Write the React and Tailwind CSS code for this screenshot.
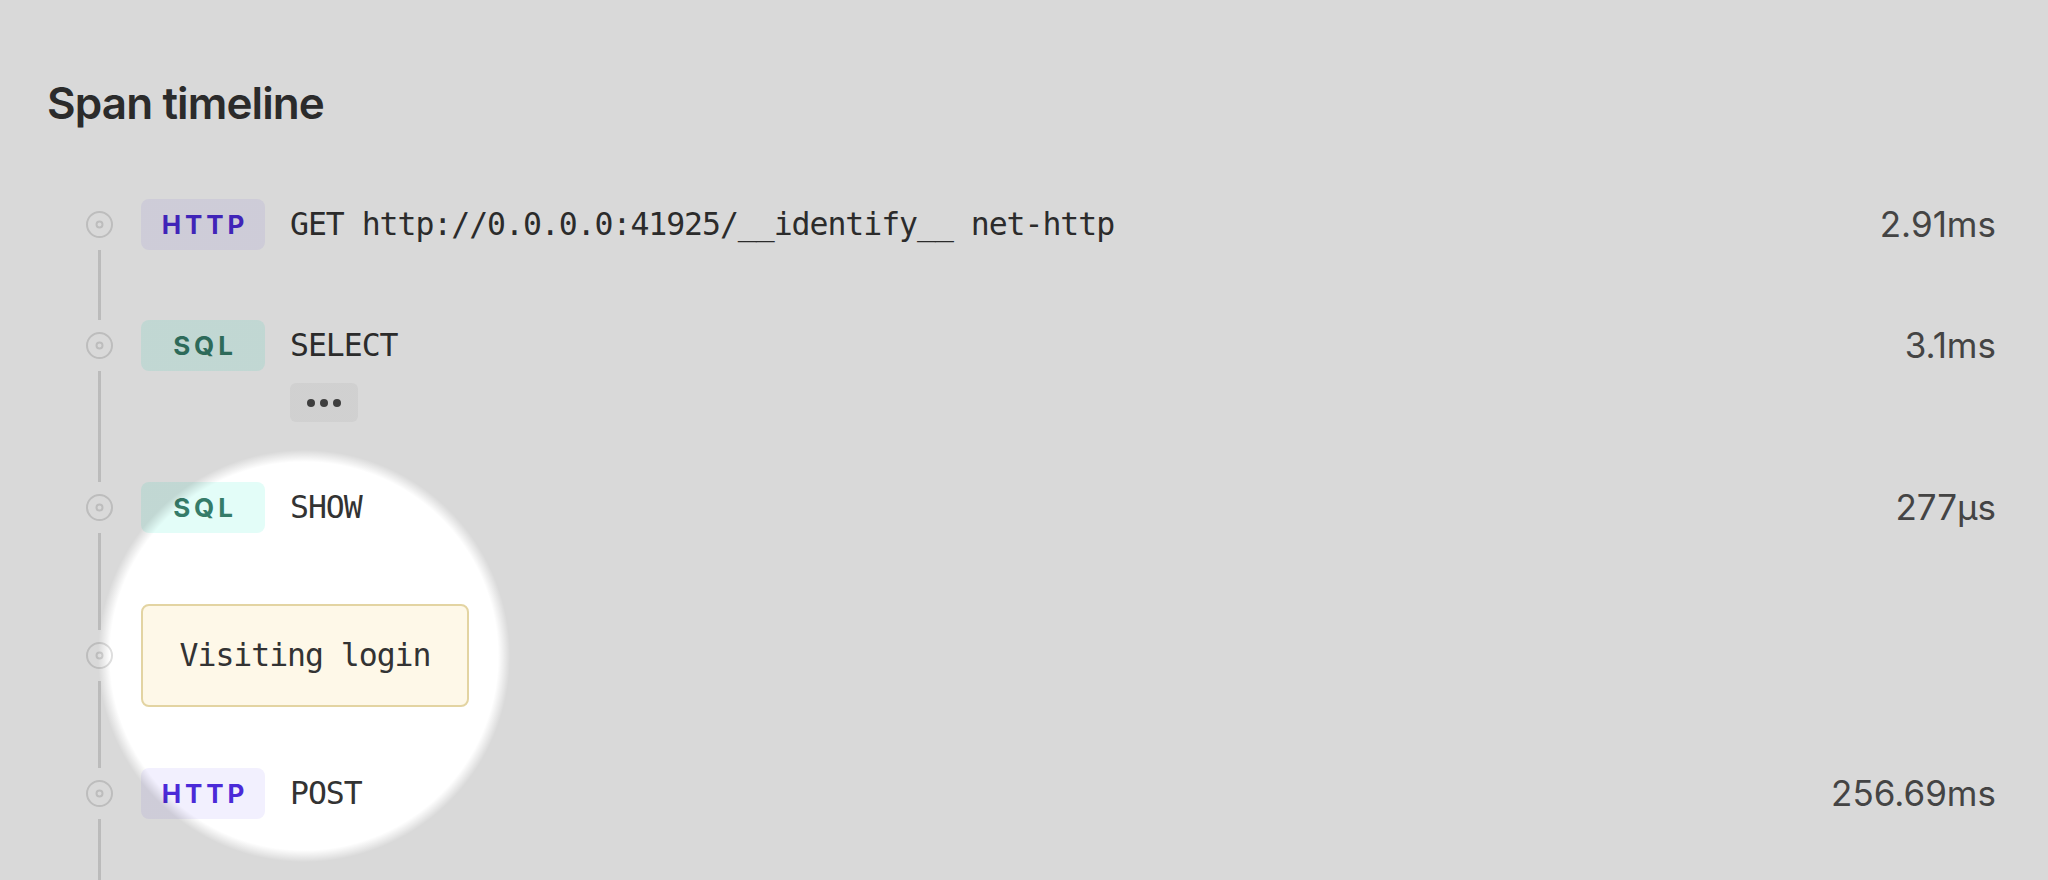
import React from 'react';

// Timeline node marker: outer ring with small inner ring
const Node = () => (
  <svg width="27" height="27" viewBox="0 0 27 27">
    <circle cx="13.5" cy="13.5" r="12.5" fill="none" stroke="#dedede" strokeWidth="2" />
    <circle cx="13.5" cy="13.5" r="3" fill="none" stroke="#dedede" strokeWidth="2" />
  </svg>
);

const Badge = ({ kind }) => {
  const styles = {
    HTTP: 'bg-[#f2f0fe] text-[#4b2ad8]',
    SQL: 'bg-[#e3fdf8] text-[#357c69]',
  };
  return (
    <div
      className={`flex h-[51px] w-[124px] shrink-0 items-center justify-center rounded-[8px] pl-[0.15em] font-['Inter',sans-serif] text-[26px] font-bold tracking-[0.15em] ${styles[kind]}`}
    >
      {kind}
    </div>
  );
};

const Duration = ({ children }) => (
  <div className="ml-auto font-['Inter',sans-serif] text-[35px] leading-none text-[#505050]">
    {children}
  </div>
);

const Row = ({ head, children, bodyClass }) => (
  <div className="flex flex-col">
    <div className="flex items-stretch">
      <div className="flex w-[27px] shrink-0 flex-col items-center">
        <div className="w-[3px] flex-1 bg-[#dcdcdc]" />
        <div className="my-3 flex">
          <Node />
        </div>
        <div className="w-[3px] flex-1 bg-[#dcdcdc]" />
      </div>
      <div className="ml-[28px] flex flex-1 items-center">{head}</div>
    </div>
    <div className="flex">
      <div className="flex w-[27px] shrink-0 justify-center">
        <div className="w-[3px] bg-[#dcdcdc]" />
      </div>
      <div className={`ml-[28px] flex-1 ${bodyClass}`}>{children}</div>
    </div>
  </div>
);

const SpanText = ({ children }) => (
  <span className="ml-[25px] font-['DejaVu_Sans_Mono',monospace] text-[31.5px] leading-none tracking-[-1.05px] text-[#333333]">
    {children}
  </span>
);

export default function App() {
  return (
    <div className="relative h-[880px] overflow-hidden bg-white">
      <div className="pl-[47px] pr-[52px] pt-[81px]">
        <h1 className="font-['Inter',sans-serif] text-[44px] font-semibold leading-none tracking-[-0.02em] text-[#323232]">
          Span timeline
        </h1>

        <div className="ml-[39px] mt-[74px]">
          <Row
            bodyClass="pb-[70px]"
            head={
              <>
                <Badge kind="HTTP" />
                <SpanText>GET http://0.0.0.0:41925/__identify__ net-http</SpanText>
                <Duration>2.91ms</Duration>
              </>
            }
          />

          <Row
            bodyClass="pt-[12px] pb-[60px]"
            head={
              <>
                <Badge kind="SQL" />
                <SpanText>SELECT</SpanText>
                <Duration>3.1ms</Duration>
              </>
            }
          >
            <div className="ml-[149px] flex h-[39px] w-[68px] items-center justify-center gap-[5px] rounded-[6px] bg-[#f5f5f5]">
              <span className="h-[8px] w-[8px] rounded-full bg-[#494949]" />
              <span className="h-[8px] w-[8px] rounded-full bg-[#494949]" />
              <span className="h-[8px] w-[8px] rounded-full bg-[#494949]" />
            </div>
          </Row>

          <Row
            bodyClass="pb-[71px]"
            head={
              <>
                <Badge kind="SQL" />
                <SpanText>SHOW</SpanText>
                <Duration>277µs</Duration>
              </>
            }
          />

          <Row
            bodyClass="pb-[61px]"
            head={
              <div className="flex h-[103px] w-[328px] items-center justify-center rounded-[8px] border-2 border-[#e3d4a2] bg-[#fef8e8] font-['DejaVu_Sans_Mono',monospace] text-[31.5px] leading-none tracking-[-1.05px] text-[#333333]">
                Visiting login
              </div>
            }
          />

          <Row
            bodyClass="pb-[80px]"
            head={
              <>
                <Badge kind="HTTP" />
                <SpanText>POST</SpanText>
                <Duration>256.69ms</Duration>
              </>
            }
          />
        </div>
      </div>

      {/* spotlight overlay */}
      <div className="pointer-events-none absolute inset-0 bg-[radial-gradient(circle_at_304px_656px,transparent_194px,rgba(0,0,0,0.15)_206px)]" />
    </div>
  );
}
